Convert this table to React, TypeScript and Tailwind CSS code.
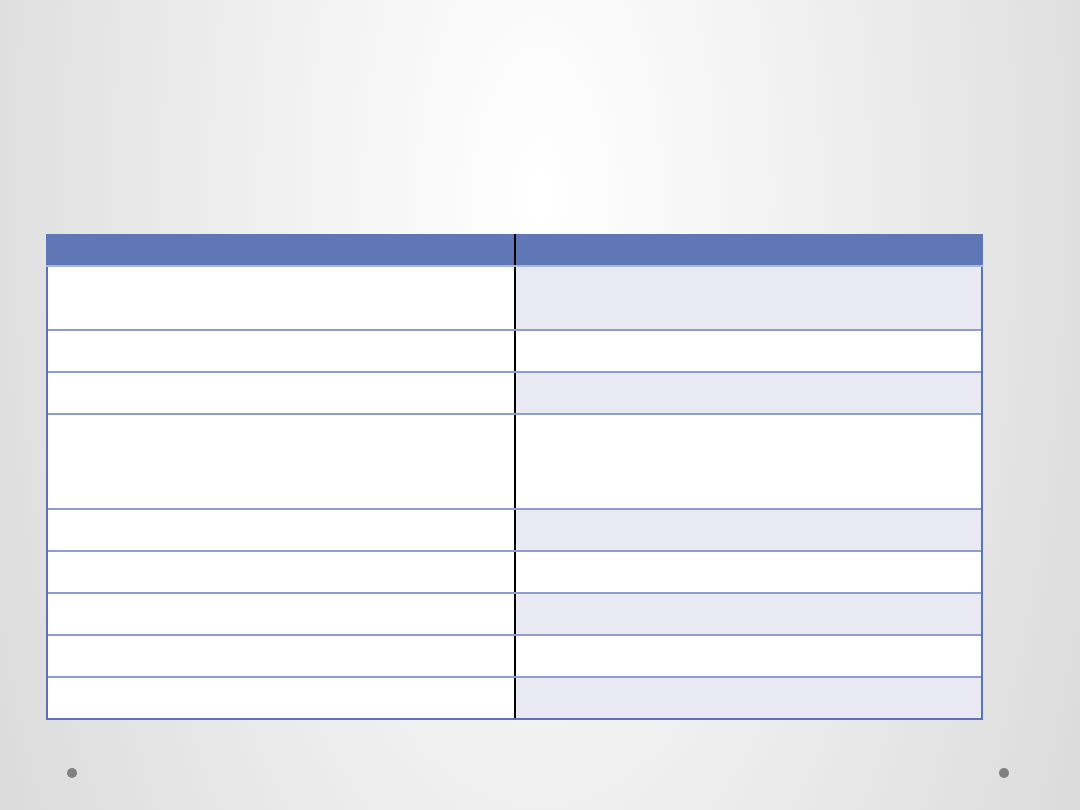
import React from "react";

const rows: { h: string; shade: boolean }[] = [
  { h: "h-[64px]", shade: true },
  { h: "h-[42px]", shade: false },
  { h: "h-[42px]", shade: true },
  { h: "h-[95px]", shade: false },
  { h: "h-[42px]", shade: true },
  { h: "h-[42px]", shade: false },
  { h: "h-[42px]", shade: true },
  { h: "h-[42px]", shade: false },
  { h: "h-[40px]", shade: true },
];

export default function App() {
  return (
    <div
      className="w-[1080px] h-[810px] overflow-hidden flex flex-col bg-[radial-gradient(ellipse_55%_160%_at_50%_24%,#ffffff_0%,#f2f2f2_40%,#dcdcdc_100%)]"
      style={{ fontFamily: '"Liberation Sans", Arial, sans-serif' }}
    >
      <div className="pt-[234px] pl-[46px]">
        <div className="w-[937px] border-l-2 border-r-2 border-b-2 border-[#5b72b8] bg-white">
          <div className="flex h-[33px] bg-[#5f77b5] border-b-2 border-[#a9b6dc] -mr-[2px] -ml-[2px]">
            <div className="w-[470px] border-r-2 border-black"></div>
            <div className="flex-1"></div>
          </div>
          {rows.map((r, i) => (
            <div
              key={i}
              className={`flex ${r.h} ${i < rows.length - 1 ? "border-b-2 border-[#8e9dcb]" : ""}`}
            >
              <div className="w-[468px] border-r-2 border-black bg-white"></div>
              <div className={`flex-1 ${r.shade ? "bg-[#e8e9f3]" : "bg-white"}`}></div>
            </div>
          ))}
        </div>
      </div>
      <div className="flex justify-between pl-[67px] pr-[71px] mt-[48px]">
        <div className="w-[10px] h-[10px] rounded-full bg-[#808080]"></div>
        <div className="w-[10px] h-[10px] rounded-full bg-[#808080]"></div>
      </div>
    </div>
  );
}
